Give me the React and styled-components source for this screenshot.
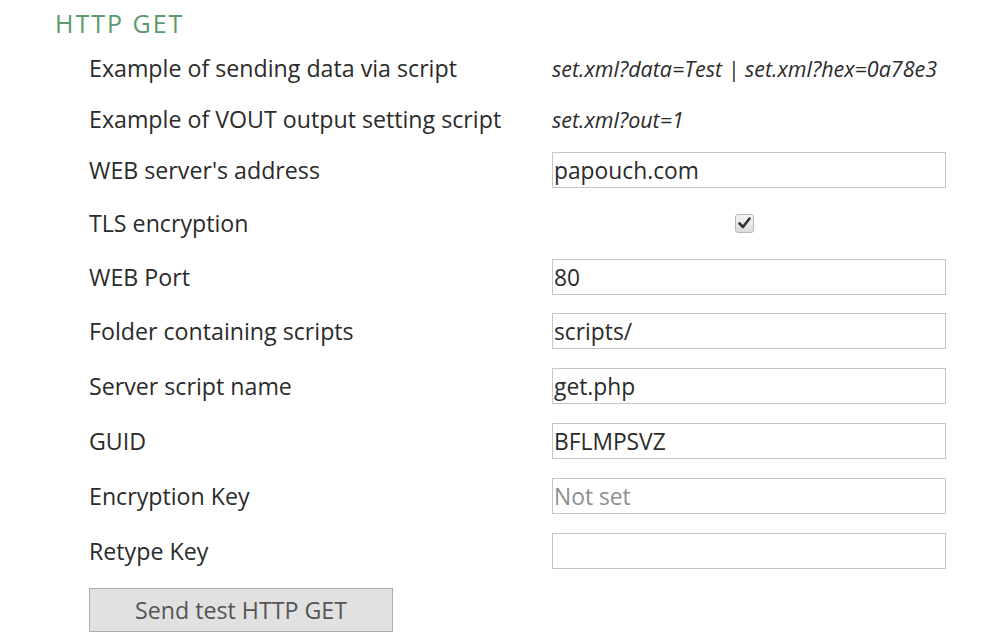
import React from 'react';
import styled, { createGlobalStyle } from 'styled-components';

const GlobalStyle = createGlobalStyle`
  body {
    margin: 0;
    background: #ffffff;
    font-family: "Open Sans", "Noto Sans", sans-serif;
    color: #2b2b2b;
  }
`;

const Page = styled.div`
  padding: 6px 0 0 55px;
  width: 945px;
  height: 640px;
  box-sizing: border-box;
`;

const Title = styled.h2`
  margin: 0;
  font-size: 25px;
  font-weight: 400;
  letter-spacing: 2px;
  color: #5c9a6b;
  line-height: 34px;
`;

const Form = styled.div`
  padding-left: 34px;
  display: flex;
  flex-direction: column;
`;

const Row = styled.div`
  display: grid;
  grid-template-columns: 463px 394px;
  align-items: center;
  height: 36px;
  margin-top: ${(p) => p.$gap}px;
`;

const Label = styled.span`
  font-size: 23.2px;
  color: #2b2b2b;
  white-space: nowrap;
`;

const Example = styled.span`
  font-size: 21.5px;
  font-style: italic;
  color: #2b2b2b;
  white-space: nowrap;
`;

const Field = styled.input`
  box-sizing: border-box;
  width: 394px;
  height: 36px;
  border: 1.5px solid #c6c6c6;
  padding: 0 1px;
  font-family: "Open Sans", "Noto Sans", sans-serif;
  font-size: 22.8px;
  color: #2b2b2b;
  outline: none;
  &::placeholder {
    color: #8f8f8f;
  }
`;

const CheckCell = styled.div`
  display: flex;
  justify-content: center;
  padding-right: 10px;
`;

const CheckBox = styled.span`
  width: 17px;
  height: 17px;
  border: 1px solid #b8b8b8;
  border-radius: 3px;
  background: linear-gradient(#f4f4f4, #dcdcdc);
  display: flex;
  align-items: center;
  justify-content: center;
`;

const Button = styled.button`
  margin-top: 19px;
  width: 304px;
  height: 44px;
  background: #e1e1e1;
  border: 1.5px solid #adadad;
  font-family: "Open Sans", "Noto Sans", sans-serif;
  font-size: 23.2px;
  color: #555555;
  padding: 0;
  cursor: pointer;
`;

const fields = [
  { label: "WEB Port", value: "80" },
  { label: "Folder containing scripts", value: "scripts/" },
  { label: "Server script name", value: "get.php" },
  { label: "GUID", value: "BFLMPSVZ" },
  { label: "Encryption Key", value: "", placeholder: "Not set" },
  { label: "Retype Key", value: "" },
];

const App = () => {
  return (
    <Page>
      <GlobalStyle />
      <Title>HTTP GET</Title>
      <Form>
        <Row $gap={10}>
          <Label>Example of sending data via script</Label>
          <Example>set.xml?data=Test | set.xml?hex=0a78e3</Example>
        </Row>
        <Row $gap={15}>
          <Label>Example of VOUT output setting script</Label>
          <Example>set.xml?out=1</Example>
        </Row>
        <Row $gap={15}>
          <Label>WEB server's address</Label>
          <Field defaultValue="papouch.com" />
        </Row>
        <Row $gap={17}>
          <Label>TLS encryption</Label>
          <CheckCell>
            <CheckBox>
              <svg width="13" height="12" viewBox="0 0 13 12">
                <path d="M1.5 6.5 L5 10 L11.5 1.5" fill="none" stroke="#333" strokeWidth="2.6" strokeLinecap="round" strokeLinejoin="round" />
              </svg>
            </CheckBox>
          </CheckCell>
        </Row>
        {fields.map((f, i) => (
          <Row key={f.label} $gap={i < 2 ? 18 : 19}>
            <Label>{f.label}</Label>
            <Field defaultValue={f.value} placeholder={f.placeholder} />
          </Row>
        ))}
        <Button>Send test HTTP GET</Button>
      </Form>
    </Page>
  );
};

export default App;
